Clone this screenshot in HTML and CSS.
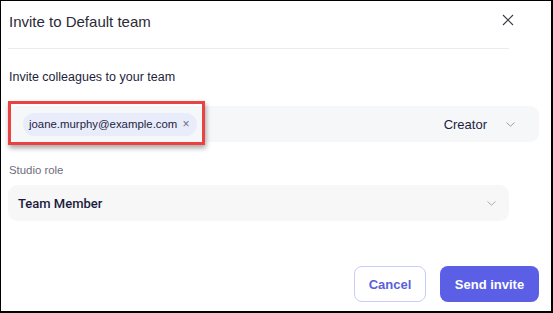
FILE: index.html
```html
<!DOCTYPE html>
<html>
<head>
<meta charset="utf-8">
<link rel="stylesheet" href="styles.css">
</head>
<body>
<div class="dialog">
  <div class="dialog-header">
    <h2 class="dialog-title">Invite to Default team</h2>
    <button class="close-btn" aria-label="Close">
      <svg width="12" height="12" viewBox="0 0 12 12"><path d="M1 1L11 11M11 1L1 11" stroke="#3a3a44" stroke-width="1.1" fill="none"/></svg>
    </button>
  </div>
  <div class="divider"></div>

  <p class="section-label">Invite colleagues to your team</p>
  <div class="invite-row">
    <div class="chip">joane.murphy@example.com <span class="chip-x">&#215;</span></div>
    <div class="role-select">
      <span>Creator</span>
      <svg width="9" height="5" viewBox="0 0 9 5"><path d="M0.5 0.5L4.5 4.2L8.5 0.5" stroke="#9c9cb0" stroke-width="1" fill="none"/></svg>
    </div>
    <div class="highlight"></div>
  </div>

  <p class="field-label">Studio role</p>
  <div class="studio-select">
    <span>Team Member</span>
    <svg width="9" height="5" viewBox="0 0 9 5"><path d="M0.5 0.5L4.5 4.2L8.5 0.5" stroke="#a8a8b8" stroke-width="1" fill="none"/></svg>
  </div>

  <div class="dialog-footer">
    <button class="btn btn-cancel">Cancel</button>
    <button class="btn btn-send">Send invite</button>
  </div>
</div>
</body>
</html>
```

FILE: styles.css
```css
/* invite dialog */
body {
  margin: 0;
  font-family: "Liberation Sans", Arial, sans-serif;
  background: #fff;
}

.dialog {
  width: 553px;
  height: 313px;
  box-sizing: border-box;
  border-style: solid;
  border-color: #000;
  border-width: 1px 2px 2px 1px;
  padding-left: 7px;
  background: #fff;
}

.dialog-header {
  display: flex;
  align-items: center;
  justify-content: space-between;
  width: 512px;
  height: 39px;
}

.dialog-title {
  margin: 2px 0 0;
  font-size: 15px;
  font-weight: 400;
  color: #2b2b36;
  padding-left: 1px;
}

.close-btn {
  width: 24px;
  height: 24px;
  padding: 0;
  border: 0;
  background: none;
  display: flex;
  align-items: center;
  justify-content: center;
  margin-top: -2px;
}

.divider {
  width: 501px;
  height: 1px;
  margin-top: 8px;
  background: #ebebf2;
}

.section-label {
  margin: 18px 0 0 1px;
  line-height: 20px;
  font-size: 12.5px;
  color: #1d1e3a;
}

.invite-row {
  position: relative;
  display: flex;
  align-items: center;
  justify-content: space-between;
  width: 531px;
  height: 36px;
  margin-top: 19px;
  box-sizing: border-box;
  padding: 0 24px 0 15px;
  border-radius: 9px;
  background: #f6f7f9;
}

.chip {
  height: 23px;
  line-height: 23px;
  padding: 0 7px 0 6px;
  border-radius: 12px;
  background: #e9ecfb;
  font-size: 11.4px;
  color: #1d1e3f;
}

.chip-x {
  margin-left: 2px;
  font-size: 12px;
  color: #6c6c82;
}

.role-select {
  display: flex;
  align-items: center;
  gap: 19px;
  font-size: 13px;
  color: #1d1e3f;
}

.highlight {
  position: absolute;
  left: 0;
  top: -5px;
  width: 197px;
  height: 44px;
  box-sizing: border-box;
  border: 3px solid #ec4141;
  box-shadow: 1px 3px 5px rgba(0, 0, 0, 0.35);
}

.field-label {
  margin: 19px 0 0 1px;
  line-height: 18px;
  font-size: 11.4px;
  color: #6d6d7d;
}

.studio-select {
  display: flex;
  align-items: center;
  justify-content: space-between;
  width: 501px;
  height: 36px;
  margin-top: 6px;
  box-sizing: border-box;
  padding: 0 13px 0 10px;
  border-radius: 9px;
  background: #f7f7f8;
  font-family: Roboto, "Liberation Sans", sans-serif;
  font-size: 13px;
  font-weight: 500;
  color: #1b1c3d;
}

.dialog-footer {
  display: flex;
  justify-content: flex-end;
  gap: 14px;
  width: 531px;
  margin-top: 45px;
}

.btn {
  height: 36px;
  border-radius: 8px;
  font-family: inherit;
  font-size: 13px;
  font-weight: 700;
  cursor: pointer;
}

.btn-cancel {
  width: 72px;
  border: 1px solid #c9cbfa;
  background: #fff;
  color: #5a5fdc;
}

.btn-send {
  width: 99px;
  border: 0;
  background: #5a5fe6;
  color: #fff;
}
```
